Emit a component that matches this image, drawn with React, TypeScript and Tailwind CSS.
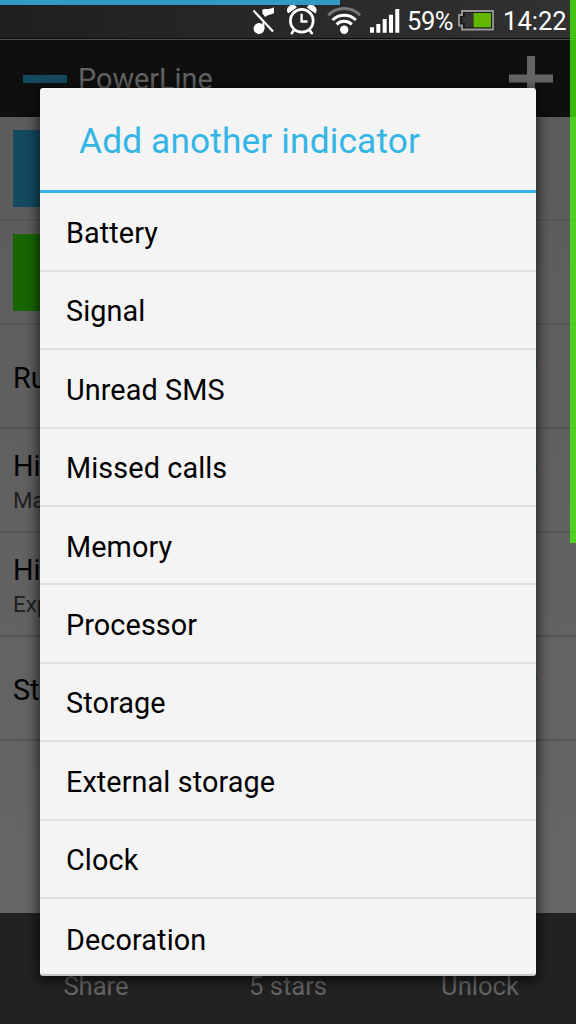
const INDICATORS = [
  "Battery",
  "Signal",
  "Unread SMS",
  "Missed calls",
  "Memory",
  "Processor",
  "Storage",
  "External storage",
  "Clock",
  "Decoration",
];

type SettingProps = {
  title: string;
  summary?: string;
  checked?: boolean;
};

function StatusBar() {
  return (
    <div className="relative h-10 shrink-0 border-b border-[#505050] bg-linear-to-r from-[#1f1f1f] to-[#323232] shadow-[inset_0_-1px_0_#0b0b0b]">
      <div className="flex h-10 items-start pl-[250px]">
        <svg width="154" height="40" viewBox="250 0 154 40" fill="none" className="shrink-0">
          {/* muted note */}
          <circle cx="259" cy="28.5" r="5.4" fill="#fff" />
          <path d="M263.4 29V22" stroke="#fff" strokeWidth="2" />
          <path d="M262.4 9.5C266 8.6 270 9.8 274 7.3V13C270.5 15.2 268 14.4 265.2 17L262.4 13.5Z" fill="#fff" />
          <path d="M253.5 10.5L273 31.5" stroke="#fff" strokeWidth="2.2" />
          {/* alarm */}
          <circle cx="301.8" cy="20.8" r="11.4" stroke="#fff" strokeWidth="2.7" />
          <path d="M301.6 13.8V21.5H307.5" stroke="#fff" strokeWidth="2.4" />
          <path d="M288.2 12.9A5 5 0 0 1 296.4 7.2Z" fill="#fff" stroke="#fff" strokeWidth="1" />
          <path d="M315.4 12.9A5 5 0 0 0 307.2 7.2Z" fill="#fff" stroke="#fff" strokeWidth="1" />
          <path d="M294.2 29.8L291.8 33.2M309.4 29.8L311.8 33.2" stroke="#fff" strokeWidth="2.6" strokeLinecap="round" />
          {/* wifi */}
          <path d="M328.3 15.2A22.5 22.5 0 0 1 360.1 15.2" stroke="#777" strokeWidth="3" />
          <path d="M332.5 20A16.8 16.8 0 0 1 355.9 20" stroke="#fff" strokeWidth="3" />
          <path d="M336.6 24.4A11 11 0 0 1 351.8 24.4" stroke="#fff" strokeWidth="3" />
          <circle cx="344.2" cy="29.8" r="4.2" fill="#fff" />
          {/* signal */}
          <path d="M370 27.3h4v5.4h-4zM376.3 24h4v8.7h-4zM382.7 19h4v13.7h-4zM389 14.7h4v18h-4zM395.3 9h4v23.7h-4z" fill="#fff" />
        </svg>
        <div className="ml-[3px] w-[50px] whitespace-nowrap pt-[5px] text-[25.5px] leading-8 tracking-[-0.4px] text-white">59%</div>
        <svg width="37" height="40" viewBox="457 0 37 40" fill="none" className="shrink-0">
          <path d="M462 11H493V29.5H462V25.5H459V15H462Z" fill="#1a1a1a" stroke="#999" strokeWidth="1.8" />
          <path d="M465 13H473V27H465V23H462V17H465Z" fill="#343434" />
          <path d="M473.5 13H491V27.3H473.5Z" fill="#62b800" />
        </svg>
        <div className="ml-[9px] whitespace-nowrap pt-[5px] text-[25.6px] leading-8 text-white">14:22</div>
      </div>
      <div className="absolute left-0 top-0 h-[5px] w-[340px] bg-[#3399c4]" />
    </div>
  );
}

function ActionBar() {
  return (
    <div className="flex h-[77px] shrink-0 items-center bg-[#0f0f0f] pl-[23px] pr-[23px]">
      <div className="h-2 w-[44px] bg-[#144a60]" />
      <div className="ml-[11px] pt-0.5 text-[28.8px] text-[#636363]">PowerLine</div>
      <svg width="45" height="45" viewBox="0 0 45 45" className="ml-auto">
        <path d="M19 0h8v18.5h18v8H27V45h-8V26.5H1v-8h18z" fill="#666" />
      </svg>
    </div>
  );
}

function ColorRow({ className }: { className: string }) {
  return (
    <div className="flex h-[104px] items-center border-b-2 border-[#555555] pl-[13px]">
      <div className={`h-[77px] w-[77px] ${className}`} />
    </div>
  );
}

function SettingRow({ title, summary, checked }: SettingProps) {
  return (
    <div className="flex h-[104px] items-center justify-between border-b-2 border-[#555555] pl-[13px] pr-[37px]">
      <div className={summary ? "pt-[6px]" : "pt-[3px]"}>
        <div className="text-[28.8px] leading-[34px] text-black">{title}</div>
        {summary && <div className="text-[22.4px] leading-[34px] text-[#202020]">{summary}</div>}
      </div>
      {checked && (
        <svg width="28" height="28" viewBox="0 0 28 28" fill="none" className="-mt-[14px]">
          <path d="M3 15L10 23L25 9" stroke="#0c5878" strokeWidth="5" />
        </svg>
      )}
    </div>
  );
}

function IndicatorDialog() {
  return (
    <div className="absolute left-10 top-[88px] h-[888px] w-[496px] overflow-hidden rounded-[3px] border-b-2 border-[#c4c4c4] bg-[#f4f4f4] shadow-[0_3px_13px_2px_rgba(0,0,0,0.65)]">
      <div className="flex h-[105.4px] items-center border-b-3 border-[#33b5e5] pl-[39px] pt-[4px]">
        <h1 className="whitespace-nowrap text-[35.2px] leading-[42px] tracking-[0.18px] text-[#33b5e5]">Add another indicator</h1>
      </div>
      <ul className="divide-y-2 divide-[#e0e0e0]">
        {INDICATORS.map((name) => (
          <li key={name} className="flex h-[78.4px] items-center pl-[26px] pt-[4px] text-[28.8px] tracking-[0.1px] text-black">
            {name}
          </li>
        ))}
      </ul>
    </div>
  );
}

export default function App() {
  return (
    <div className="relative flex h-[1024px] w-[576px] flex-col overflow-hidden bg-[#616161] font-['Roboto',sans-serif]">
      <StatusBar />
      <ActionBar />
      <div className="flex-1 bg-linear-to-b from-[#5c5c5c] to-[#666666]">
        <ColorRow className="bg-[#144a60]" />
        <ColorRow className="bg-[#196600]" />
        <SettingRow title="Run" checked />
        <SettingRow title="Hide" summary="Made" checked />
        <SettingRow title="Hide" summary="Exp" />
        <SettingRow title="Start" checked />
      </div>
      <div className="grid h-[111px] shrink-0 grid-cols-3 items-end bg-[#222222] pb-[22px] text-center text-[25.6px] leading-8 text-[#666666]">
        <span>Share</span>
        <span>5 stars</span>
        <span>Unlock</span>
      </div>
      <IndicatorDialog />
      <div className="absolute right-0 top-0 h-[543px] w-1.5 bg-[rgba(70,252,5,0.72)]" />
    </div>
  );
}
